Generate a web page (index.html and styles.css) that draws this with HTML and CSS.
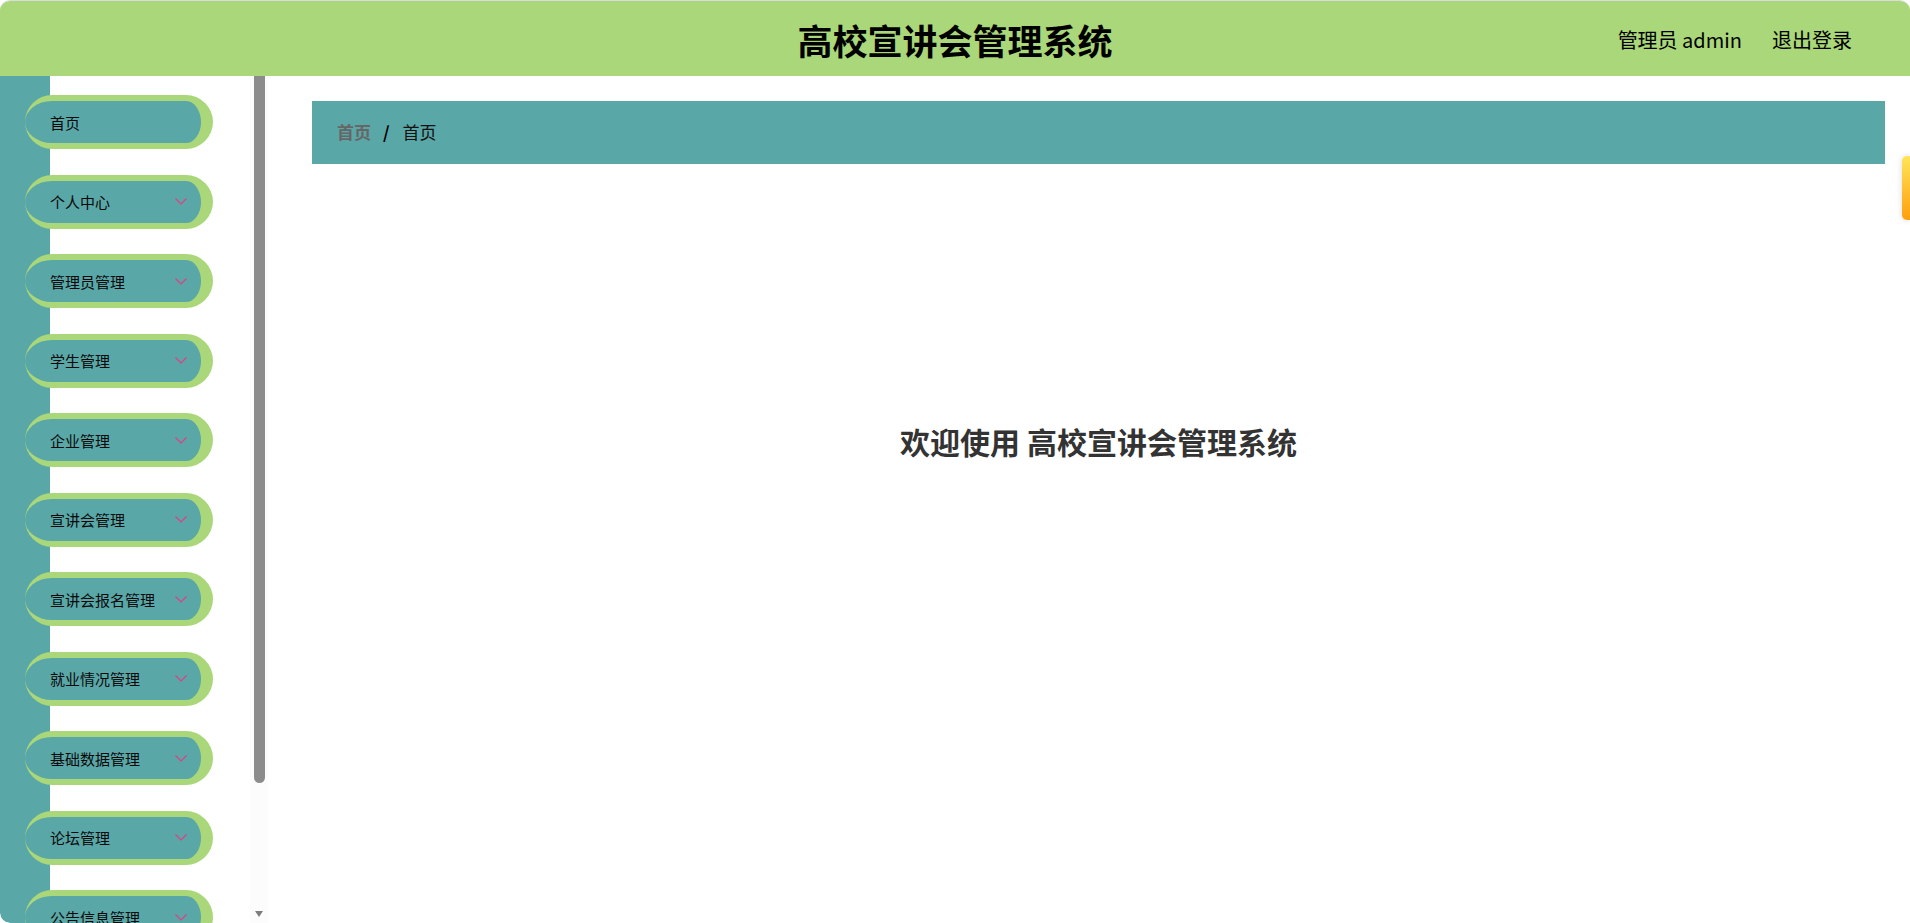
FILE: index.html
```html
<!DOCTYPE html>
<html lang="zh-CN">
<head>
<meta charset="utf-8">
<title>高校宣讲会管理系统</title>
<link rel="stylesheet" href="styles.css">
</head>
<body>
<div class="app">
  <header class="topbar">
    <div class="spacer"></div>
    <div class="title">高校宣讲会管理系统</div>
    <div class="user">
      <span class="user-name">管理员 admin</span>
      <span class="logout">退出登录</span>
    </div>
  </header>
  <div class="layout">
    <aside class="sidebar">
      <div class="menu-wrap">
        <ul class="menu">
          <li class="item"><span class="label">首页</span></li>
          <li class="item"><span class="label">个人中心</span><svg class="arrow" viewBox="0 0 12 7" width="12" height="7"><path d="M0.5 0.5 L6 6 L11.5 0.5" fill="none" stroke="#e23d85" stroke-width="1.2"/></svg></li>
          <li class="item"><span class="label">管理员管理</span><svg class="arrow" viewBox="0 0 12 7" width="12" height="7"><path d="M0.5 0.5 L6 6 L11.5 0.5" fill="none" stroke="#e23d85" stroke-width="1.2"/></svg></li>
          <li class="item"><span class="label">学生管理</span><svg class="arrow" viewBox="0 0 12 7" width="12" height="7"><path d="M0.5 0.5 L6 6 L11.5 0.5" fill="none" stroke="#e23d85" stroke-width="1.2"/></svg></li>
          <li class="item"><span class="label">企业管理</span><svg class="arrow" viewBox="0 0 12 7" width="12" height="7"><path d="M0.5 0.5 L6 6 L11.5 0.5" fill="none" stroke="#e23d85" stroke-width="1.2"/></svg></li>
          <li class="item"><span class="label">宣讲会管理</span><svg class="arrow" viewBox="0 0 12 7" width="12" height="7"><path d="M0.5 0.5 L6 6 L11.5 0.5" fill="none" stroke="#e23d85" stroke-width="1.2"/></svg></li>
          <li class="item"><span class="label">宣讲会报名管理</span><svg class="arrow" viewBox="0 0 12 7" width="12" height="7"><path d="M0.5 0.5 L6 6 L11.5 0.5" fill="none" stroke="#e23d85" stroke-width="1.2"/></svg></li>
          <li class="item"><span class="label">就业情况管理</span><svg class="arrow" viewBox="0 0 12 7" width="12" height="7"><path d="M0.5 0.5 L6 6 L11.5 0.5" fill="none" stroke="#e23d85" stroke-width="1.2"/></svg></li>
          <li class="item"><span class="label">基础数据管理</span><svg class="arrow" viewBox="0 0 12 7" width="12" height="7"><path d="M0.5 0.5 L6 6 L11.5 0.5" fill="none" stroke="#e23d85" stroke-width="1.2"/></svg></li>
          <li class="item"><span class="label">论坛管理</span><svg class="arrow" viewBox="0 0 12 7" width="12" height="7"><path d="M0.5 0.5 L6 6 L11.5 0.5" fill="none" stroke="#e23d85" stroke-width="1.2"/></svg></li>
          <li class="item"><span class="label">公告信息管理</span><svg class="arrow" viewBox="0 0 12 7" width="12" height="7"><path d="M0.5 0.5 L6 6 L11.5 0.5" fill="none" stroke="#e23d85" stroke-width="1.2"/></svg></li>
          <li class="item"><span class="label">轮播图信息</span><svg class="arrow" viewBox="0 0 12 7" width="12" height="7"><path d="M0.5 0.5 L6 6 L11.5 0.5" fill="none" stroke="#e23d85" stroke-width="1.2"/></svg></li>
        </ul>
      </div>
      <div class="scrollbar">
        <div class="thumb"></div>
        <div class="down-btn"><span class="tri"></span></div>
      </div>
    </aside>
    <main class="main">
      <nav class="crumb">
        <span class="crumb-first">首页</span>
        <span class="crumb-sep">/</span>
        <span class="crumb-last">首页</span>
      </nav>
      <div class="welcome">欢迎使用 高校宣讲会管理系统</div>
    </main>
  </div>
  <div class="side-tab"></div>
</div>
</body>
</html>
```

FILE: styles.css
```css
* { box-sizing: border-box; }
html, body {
  margin: 0;
  padding: 0;
  height: 100%;
  overflow: hidden;
  background: #ffffff;
}
body {
  font-family: "Noto Sans CJK SC", "Noto Sans", sans-serif;
  color: #000;
}
.app {
  position: relative;
  height: 923px;
  border-top: 1px solid #dcdcdc;
  border-radius: 10px;
  overflow: hidden;
  display: flex;
  flex-direction: column;
}
.topbar {
  height: 75px;
  flex: none;
  background: #a9d779;
  display: grid;
  grid-template-columns: 1fr auto 1fr;
  align-items: center;
}
.title {
  font-size: 35px;
  font-weight: 700;
  line-height: 1;
  padding-top: 2px;
}
.user {
  justify-self: end;
  display: flex;
  gap: 30px;
  margin-right: 58px;
  font-size: 20px;
  line-height: 1;
  padding-top: 3px;
}
.layout {
  flex: 1;
  display: flex;
  min-height: 0;
}
.sidebar {
  width: 268px;
  flex: none;
  height: 847px;
  display: flex;
  overflow: hidden;
  border-bottom-left-radius: 10px;
}
.menu-wrap {
  flex: 1;
  overflow: hidden;
  background: linear-gradient(to right, #5aa7a8 50px, #ffffff 50px);
}
.scrollbar {
  width: 18px;
  flex: none;
  background: #fcfcfc;
  display: flex;
  flex-direction: column;
  align-items: center;
}
.thumb {
  width: 11px;
  height: 707px;
  background: #8c8c8c;
  border-radius: 0 0 6px 6px;
}
.down-btn {
  margin-top: auto;
  height: 18px;
  width: 100%;
  display: flex;
  justify-content: center;
  padding-top: 6px;
}
.tri {
  width: 0;
  height: 0;
  border-left: 4.5px solid transparent;
  border-right: 4.5px solid transparent;
  border-top: 6px solid #7d7d7d;
}
.menu {
  list-style: none;
  margin: 0;
  padding: 19px 0 52px 0;
  display: flex;
  flex-direction: column;
  gap: 25.5px;
}
.item {
  margin-left: 25px;
  width: 188px;
  height: 54px;
  flex: none;
  background: #5aa7a8;
  border: 6px solid #a9d779;
  border-left: 0;
  border-right-width: 12px;
  border-radius: 27px;
  display: flex;
  align-items: center;
  padding-left: 25px;
  padding-right: 14px;
  font-size: 15px;
  color: #0a0a0a;
}
.label {
  line-height: 1;
  white-space: nowrap;
}
.arrow {
  margin-left: auto;
  display: block;
}
.main {
  flex: 1;
  min-width: 0;
  padding: 25px 25px 0 44px;
  display: flex;
  flex-direction: column;
}
.crumb {
  height: 63px;
  background: #5aa7a8;
  display: flex;
  align-items: center;
  padding-left: 25px;
  padding-bottom: 3px;
  font-size: 17px;
  line-height: 1;
}
.crumb-first {
  color: #666;
  font-weight: 700;
}
.crumb-sep {
  margin: 0 13px 0 12px;
  color: #000;
  font-weight: 700;
}
.crumb-last {
  color: #111;
}
.welcome {
  margin-top: 259px;
  text-align: center;
  font-size: 30px;
  font-weight: 700;
  color: #333;
  line-height: 36px;
}
.side-tab {
  position: absolute;
  right: 0;
  top: 155px;
  width: 8px;
  height: 64px;
  border-radius: 5px 0 0 5px;
  background: linear-gradient(to bottom, #ffe55a, #ffb324 70%, #ff9f0a);
  box-shadow: 0 0 6px rgba(0,0,0,0.15);
}
```
